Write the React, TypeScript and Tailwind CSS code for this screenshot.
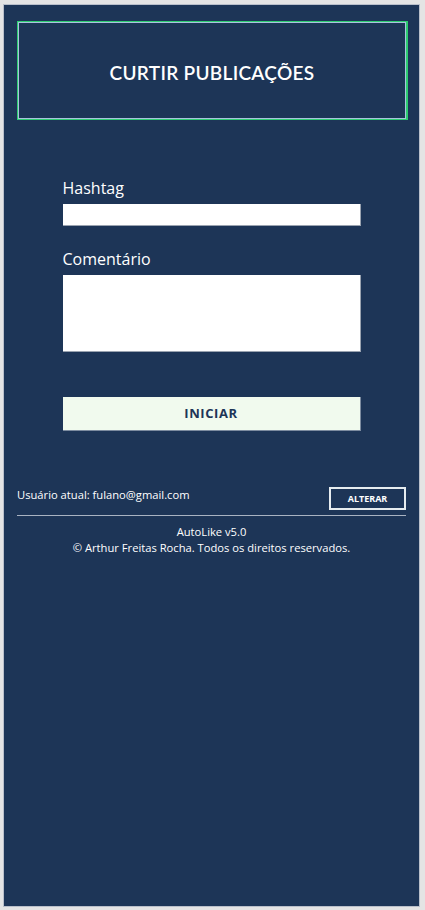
export default function App() {
  return (
    <div className="w-[425px] h-[910px] bg-[#e4e4e4] pt-[4px] pl-[3px] font-['Open_Sans',sans-serif]">
      <div className="w-[417px] h-[903px] bg-[#1d3557] border border-[#b9bfca] px-[13px] pt-[16px]">
        {/* cabeçalho */}
        <div className="w-[391px] h-[99px] border border-[#2ecc71] border-r-2">
          <div className="w-full h-full border border-[#a8c4dc] flex items-center justify-center">
            <h1 className="text-white text-[19px] tracking-[0.3px] font-['Lato',sans-serif] font-semibold mt-[6px]">
              CURTIR PUBLICAÇÕES
            </h1>
          </div>
        </div>

        {/* formulário */}
        <div className="w-[298px] mx-auto mt-[56px] flex flex-col">
          <label className="text-white text-[16px] leading-[24px] mb-[4px]">Hashtag</label>
          <input className="h-[22px] bg-white border-b border-r border-[#9aa3b0] outline-none" />
          <label className="text-white text-[16px] leading-[24px] mt-[21px] mb-[4px]">Comentário</label>
          <textarea className="h-[77px] bg-white border-b border-r border-[#9aa3b0] outline-none resize-none" />
          <button className="mt-[45px] h-[34px] bg-[#f1faee] border-b border-r border-[#7d8ca0] text-[#1d3557] text-[13px] font-bold tracking-[0.6px]">
            INICIAR
          </button>
        </div>

        {/* rodapé */}
        <div className="mt-[56px]">
          <div className="flex items-center justify-between pb-[5px] border-b border-[#a9b3c2] w-[389px]">
            <span className="text-white text-[11.2px] mt-[-6px]">Usuário atual: fulano@gmail.com</span>
            <button className="w-[77px] h-[23px] border-2 border-[#e6ecef] text-white text-[9px] font-bold">
              ALTERAR
            </button>
          </div>
          <div className="w-[389px] text-center text-white text-[11.2px] leading-[16px] mt-[8px]">
            <p>AutoLike v5.0</p>
            <p>© Arthur Freitas Rocha. Todos os direitos reservados.</p>
          </div>
        </div>
      </div>
    </div>
  );
}
